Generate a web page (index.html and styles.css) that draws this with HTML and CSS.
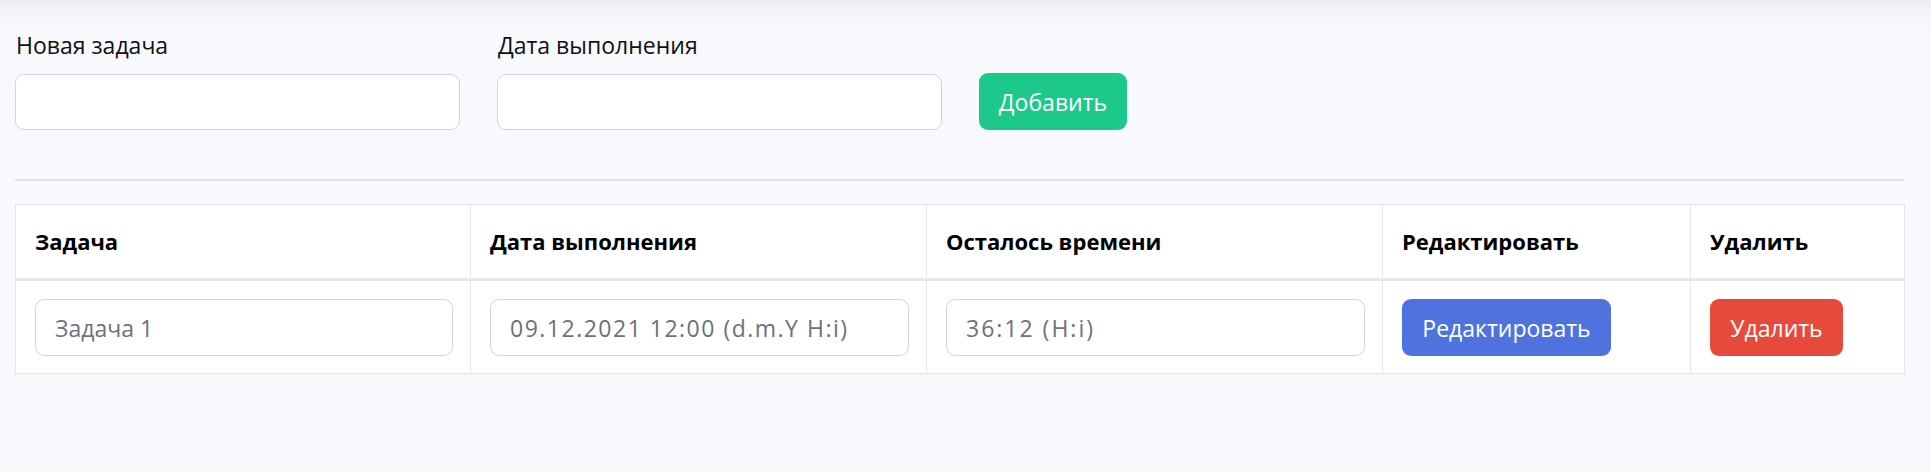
FILE: index.html
```html
<!DOCTYPE html>
<html lang="ru">
<head>
<meta charset="utf-8">
<title>Задачи</title>
<link rel="stylesheet" href="styles.css">
</head>
<body>
<div class="page">
  <form class="add-form">
    <div class="field">
      <label class="field-label">Новая задача</label>
      <input class="form-control field-input" type="text">
    </div>
    <div class="field">
      <label class="field-label">Дата выполнения</label>
      <input class="form-control field-input" type="text">
    </div>
    <button type="button" class="btn btn-success">Добавить</button>
  </form>
  <hr class="divider">
  <table class="tasks">
    <colgroup>
      <col class="c-task"><col class="c-date"><col class="c-left"><col class="c-edit"><col class="c-del">
    </colgroup>
    <thead>
      <tr>
        <th>Задача</th>
        <th>Дата выполнения</th>
        <th>Осталось времени</th>
        <th>Редактировать</th>
        <th>Удалить</th>
      </tr>
    </thead>
    <tbody>
      <tr>
        <td><input class="form-control cell-input" type="text" value="Задача 1" readonly></td>
        <td><input class="form-control cell-input num" type="text" value="09.12.2021 12:00 (d.m.Y H:i)" readonly></td>
        <td><input class="form-control cell-input num-wide" type="text" value="36:12 (H:i)" readonly></td>
        <td><button type="button" class="btn btn-primary">Редактировать</button></td>
        <td><button type="button" class="btn btn-danger">Удалить</button></td>
      </tr>
    </tbody>
  </table>
</div>
</body>
</html>
```
FILE: styles.css
```css
html, body {
  margin: 0;
  padding: 0;
}
body {
  background: linear-gradient(to bottom, #ebebef 0, #f3f4f8 12px, #f8f9fc 32px) no-repeat, #f8f9fc;
  min-height: 472px;
  font-family: "Open Sans", "Noto Sans", sans-serif;
  font-size: 23px;
  color: #111;
}
.page {
  padding: 30px 27px 0 15px;
}
.add-form {
  display: flex;
  align-items: flex-end;
  gap: 37px;
  margin: 0;
}
.field {
  display: flex;
  flex-direction: column;
  width: 445px;
}
.field-label {
  line-height: 30px;
  margin-bottom: 14px;
  color: #111;
  padding-left: 1px;
}
.form-control {
  box-sizing: border-box;
  background: #fff;
  border: 1px solid #d1d3e2;
  border-radius: 9px;
  font-family: inherit;
  font-size: 23px;
  color: #6e707e;
  outline: none;
}
.field-input {
  height: 56px;
  width: 100%;
}
.btn {
  box-sizing: border-box;
  border: none;
  border-radius: 9px;
  font-family: inherit;
  font-size: 23px;
  color: #fff;
  height: 57px;
  padding: 0;
  cursor: pointer;
}
.btn-success { background: #1cc88a; width: 148px; }
.btn-primary { background: #4e73df; width: 209px; }
.btn-danger { background: #e74a3b; width: 133px; }
.divider {
  border: none;
  border-top: 2px solid #e1e3ea;
  margin: 49px 0 23px;
}
.tasks {
  width: 100%;
  border-collapse: collapse;
  table-layout: fixed;
  background: #fff;
}
.c-task { width: 455px; }
.c-date { width: 456px; }
.c-left { width: 456px; }
.c-edit { width: 308px; }
.c-del { width: 214px; }
.tasks th, .tasks td {
  border: 1px solid #e3e6f0;
  text-align: left;
  vertical-align: middle;
}
.tasks th {
  font-weight: 700;
  font-size: 22px;
  line-height: 30px;
  padding: 21px 19px 22px;
  border-bottom: 3px solid #e3e6f0;
  color: #000;
}
.tasks td {
  padding: 18px 17px 17px 19px;
}
.cell-input {
  width: 100%;
  height: 57px;
  padding: 0 19px;
  display: block;
}
.num {
  letter-spacing: 1.5px;
}
.num-wide {
  letter-spacing: 2px;
}
.tasks td .btn {
  display: block;
}
```
